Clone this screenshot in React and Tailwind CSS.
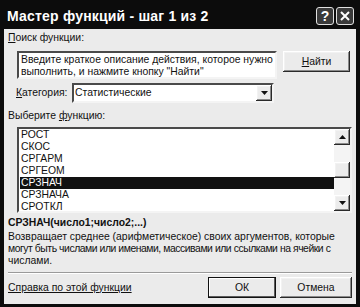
const raised =
  'shadow-[inset_-1px_-1px_#2a2a2a,inset_1px_1px_#ffffff,inset_-2px_-2px_#8a8a8a,inset_2px_2px_#f2f2f2]';
const sunken = 'border-2 border-t-[#4a4a4a] border-l-[#4a4a4a] border-b-[#f4f4f4] border-r-[#f4f4f4]';

const functions = ['РОСТ', 'СКОС', 'СРГАРМ', 'СРГЕОМ', 'СРЗНАЧ', 'СРЗНАЧА', 'СРОТКЛ'];

function Arrow({ up }) {
  return (
    <svg width="7" height="4" viewBox="0 0 7 4">
      <path d={up ? 'M3.5 0 L7 4 L0 4 Z' : 'M0 0 L7 0 L3.5 4 Z'} fill="#111" />
    </svg>
  );
}

function ScrollButton({ up }) {
  return (
    <div className={`w-[16px] h-[16px] shrink-0 bg-[#ececec] flex items-center justify-center ${raised}`}>
      <Arrow up={up} />
    </div>
  );
}

function TitleButton({ children }) {
  return (
    <div className="w-[18px] h-[18px] rounded-[3px] border border-[#e0e0e0] bg-[#3a3a3a] flex items-center justify-center text-white font-bold text-[14px] leading-none">
      {children}
    </div>
  );
}

export default function App() {
  return (
    <div
      className="w-[360px] h-[307px] bg-[#0c0c0c] flex flex-col text-[#111] text-[10.4px] leading-[12px]"
      style={{ fontFamily: '"Liberation Sans", Arial, sans-serif' }}
    >
      <div className="h-[29px] flex items-center pl-[7px] pr-[6px] pt-[2px]">
        <div className="text-white font-bold text-[14px] tracking-[0.2px] flex-1">Мастер функций - шаг 1 из 2</div>
        <div className="flex gap-[2px]">
          <TitleButton>?</TitleButton>
          <TitleButton>
            <svg width="10" height="10" viewBox="0 0 10 10">
              <path d="M1 1 L9 9 M9 1 L1 9" stroke="#fff" strokeWidth="2" />
            </svg>
          </TitleButton>
        </div>
      </div>

      <div className="flex-1 mx-[4px] mb-[3px] bg-[#ebebeb] pl-[4px] pr-[4px] flex flex-col">
        <div className="pt-[3px]">
          <span className="underline">П</span>оиск функции:
        </div>

        <div className="flex mt-[7px] ml-[9px]">
          <div className={`w-[260px] h-[28px] bg-white ${sunken} pl-[2px] pt-[1px] whitespace-nowrap overflow-hidden`}>
            <div>Введите краткое описание действия, которое нужно</div>
            <div>выполнить, и нажмите кнопку "Найти"</div>
          </div>
          <div className={`ml-[6px] w-[67px] h-[21px] bg-[#ebebeb] flex items-center justify-center ${raised}`}>
            <span>
              <span className="underline">Н</span>айти
            </span>
          </div>
        </div>

        <div className="flex items-center mt-[4px] ml-[8px]">
          <div className="w-[56px]">
            <span className="underline">К</span>атегория:
          </div>
          <div className={`w-[202px] h-[20px] bg-white ${sunken} flex items-center pl-[1px]`}>
            <div className="flex-1">Статистические</div>
            <ScrollButton />
          </div>
        </div>

        <div className="mt-[7px]">
          Выберите <span className="underline">ф</span>ункцию:
        </div>

        <div className={`mt-[5px] ml-[9px] w-[335px] h-[86px] bg-white ${sunken} flex overflow-hidden`}>
          <div className="flex-1 pl-[1px]">
            {functions.map((f) => (
              <div
                key={f}
                className={`h-[12px] pl-[1px] ${f === 'СРЗНАЧ' ? 'bg-[#111] text-white' : ''}`}
              >
                {f}
              </div>
            ))}
          </div>
          <div className="w-[16px] flex flex-col bg-[#f4f4f4]">
            <ScrollButton up />
            <div className="flex-1 flex flex-col">
              <div className="h-[17px]" />
              <div className={`h-[16px] bg-[#ececec] ${raised}`} />
            </div>
            <ScrollButton />
          </div>
        </div>

        <div className="mt-[4px] font-bold">СРЗНАЧ(число1;число2;...)</div>
        <div className="mt-[2px] h-[36px] whitespace-nowrap">
          <div>Возвращает среднее (арифметическое) своих аргументов, которые</div>
          <div className="tracking-[-0.45px]">могут быть числами или именами, массивами или ссылками на ячейки с</div>
          <div>числами.</div>
        </div>

        <div className="mt-[5px] h-[2px] border-t border-t-[#9a9a9a] border-b border-b-white" />

        <div className="flex items-center mt-[3px]">
          <div className="flex-1 underline">Справка по этой функции</div>
          <div className="w-[68px] h-[21px] border border-[#111] bg-[#ebebeb] flex items-center justify-center shadow-[inset_-1px_-1px_#5a5a5a,inset_1px_1px_#ffffff]">
            ОК
          </div>
          <div className={`ml-[4px] w-[72px] h-[21px] bg-[#ebebeb] flex items-center justify-center ${raised}`}>
            Отмена
          </div>
        </div>
      </div>
    </div>
  );
}
